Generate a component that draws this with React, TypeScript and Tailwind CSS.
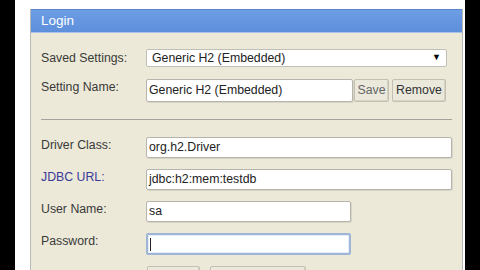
import React from "react";

const font = { fontFamily: '"Liberation Sans", Arial, sans-serif' };

function Label({ children, blue }: { children: React.ReactNode; blue?: boolean }) {
  return (
    <div className={`w-[105px] shrink-0 leading-[16px] text-[12.3px] ${blue ? "text-[#3a3a9a]" : "text-[#3a3a3a]"}`}>
      {children}
    </div>
  );
}

function Input({ w, h, value, focus }: { w: string; h: string; value?: string; focus?: boolean }) {
  return (
    <div
      className={`${w} ${h} bg-white flex items-center pl-[2px] text-[12.3px] text-[#222] rounded-[2px] ${
        focus ? "border-2 border-[#9fb6d6] shadow-[inset_0_0_0_1px_#e4ecf7]" : "border border-[#b5b5ad] shadow-[1px_1px_0_#d8d5c6]"
      }`}
    >
      {focus ? <div className="w-px h-[13px] bg-[#222] ml-[0px]" /> : value}
    </div>
  );
}

function Btn({ w, h, children, muted }: { w: string; h: string; children?: React.ReactNode; muted?: boolean }) {
  return (
    <div
      className={`${w} ${h} flex items-center justify-center rounded-[2px] border border-[#c3c0b2] bg-[#ebe8dc] text-[12.3px] ${
        muted ? "text-[#666]" : "text-[#333]"
      } shadow-[inset_-1px_-1px_0_#d7d3c3]`}
    >
      {children}
    </div>
  );
}

export default function App() {
  return (
    <div className="w-[480px] h-[270px] bg-black flex overflow-hidden" style={font}>
      <div className="w-[15px] shrink-0" />
      <div className="w-[450px] shrink-0 bg-white pt-[9px] pl-[15px] pr-[2px] flex flex-col">
        <div className="flex-1 flex flex-col border-l border-r border-[#b8b8b8]">
          <div className="h-[24px] shrink-0 bg-gradient-to-b from-[#6d9de4] to-[#5e8fdb] border-t border-[#5a86cc] border-b border-b-[#a9c3ea] flex items-center pl-[10px] text-white text-[13.5px]">
            Login
          </div>
          <div className="flex-1 bg-[#ece9d8] pl-[10px] pt-[16px] flex flex-col">
            <div className="flex items-center h-[18px]">
              <Label>Saved Settings:</Label>
              <div className="w-[301px] h-[18px] bg-white border border-[#c0c0b8] rounded-[2px] flex items-center pl-[5px] pr-[5px] text-[12.3px] text-[#222]">
                <span className="flex-1">Generic H2 (Embedded)</span>
                <span className="text-[9px] text-black">▼</span>
              </div>
            </div>
            <div className="flex items-start mt-[12px]">
              <Label>Setting Name:</Label>
              <Input w="w-[207px]" h="h-[23px]" value="Generic H2 (Embedded)" />
              <div className="ml-[1px]">
                <Btn w="w-[35px]" h="h-[23px]" muted>
                  Save
                </Btn>
              </div>
              <div className="ml-[3px]">
                <Btn w="w-[54px]" h="h-[23px]">Remove</Btn>
              </div>
            </div>
            <div className="mt-[17px] h-px w-[411px] bg-[#a4a29a]" />
            <div className="flex items-start mt-[17px]">
              <Label>Driver Class:</Label>
              <Input w="w-[306px]" h="h-[21px]" value="org.h2.Driver" />
            </div>
            <div className="flex items-start mt-[11px]">
              <Label blue>JDBC URL:</Label>
              <Input w="w-[306px]" h="h-[21px]" value="jdbc:h2:mem:testdb" />
            </div>
            <div className="flex items-start mt-[11px]">
              <Label>User Name:</Label>
              <Input w="w-[205px]" h="h-[21px]" value="sa" />
            </div>
            <div className="flex items-start mt-[11px]">
              <Label>Password:</Label>
              <Input w="w-[205px]" h="h-[22px]" focus />
            </div>
            <div className="flex items-start mt-[11px] pl-[106px] gap-[10px]">
              <Btn w="w-[53px]" h="h-[22px]" />
              <Btn w="w-[96px]" h="h-[22px]" />
            </div>
          </div>
        </div>
      </div>
      <div className="flex-1" />
    </div>
  );
}
